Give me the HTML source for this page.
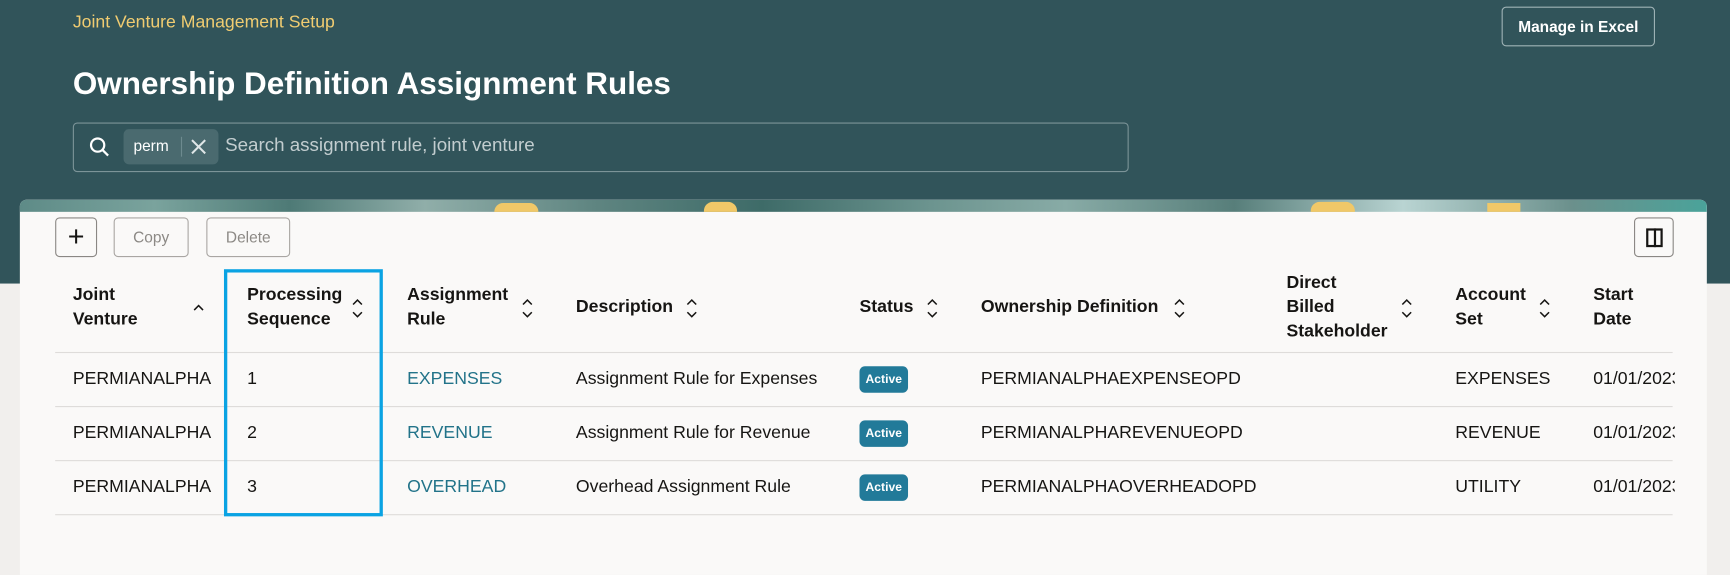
<!DOCTYPE html>
<html><head><meta charset="utf-8"><style>
*{box-sizing:border-box;margin:0;padding:0}
body{width:1730px;height:560px;overflow:hidden;background:#f1efed;font-family:"Liberation Sans",sans-serif}
#w{position:absolute;left:0;top:0;width:1568px;height:508px;transform:scale(1.10332);transform-origin:0 0}
.a{position:absolute}
.hdr{left:0;top:0;width:1568px;height:257px;background:#31545a}
.bc{left:66px;top:12px;font-size:16px;color:#f0cc71}
.xl{left:1361px;top:6px;width:139px;height:36px;border:1px solid #9fb3b6;border-radius:4px;color:#fff;font-size:14px;font-weight:bold;text-align:center;line-height:34px}
h1{position:absolute;left:66px;top:60px;font-size:28.5px;color:#fff;font-weight:bold}
.sb{left:66px;top:111px;width:957px;height:45px;border:1px solid #7c9498;border-radius:4px}
.chip{left:112px;top:117px;width:86px;height:32px;background:#4a6a6f;border-radius:5px;color:#fff;font-size:14px}
.ph{left:204px;top:122px;font-size:17px;color:#c2cdcf}
.card{left:18px;top:181px;width:1529px;height:340px;background:#faf9f8;border-radius:6px 6px 0 0;overflow:hidden}
.ban{left:0;top:0;width:1529px;height:11px;background:linear-gradient(90deg,#5e8b87 0,#7aa39d 8%,#4e7a76 16%,#90aea9 24%,#5f8581 34%,#3e6b68 44%,#6c948f 54%,#88aba6 62%,#577e7a 72%,#b9d4d2 82%,#6b908c 92%,#4aa39a 100%)}
.btn{border:1px solid #a9a6a3;border-radius:4px;font-size:14px;color:#8c8985;text-align:center;line-height:34px;height:36px;top:197px}
.th{font-size:16px;font-weight:bold;color:#161513;line-height:22px}
.td{font-size:16px;color:#161513;line-height:20px}
.ln{left:50px;width:1466px;height:1px;background:#dedcda}
.lk{color:#227389}
.bd{width:44px;height:24px;background:#227a99;border-radius:5px;color:#fff;font-size:11px;font-weight:bold;text-align:center;line-height:24px}
</style></head><body><div id="w">
<div class="a hdr"></div>
<div class="a bc">Joint Venture Management Setup</div>
<div class="a xl">Manage in Excel</div>
<h1>Ownership Definition Assignment Rules</h1>
<div class="a sb"></div>
<svg class="a" style="left:80px;top:123px" width="20" height="20" viewBox="0 0 20 20"><circle cx="8.5" cy="8.5" r="6" fill="none" stroke="#fff" stroke-width="2"/><path d="M13 13l5 5" stroke="#fff" stroke-width="2"/></svg>
<div class="a chip"><span style="position:absolute;left:9px;top:7px">perm</span><span style="position:absolute;left:52px;top:7px;width:1px;height:18px;background:#6d8a8f"></span><svg style="position:absolute;left:60px;top:8px" width="16" height="16"><path d="M2 2L14 14M14 2L2 14" stroke="#dfe6e7" stroke-width="1.8"/></svg></div>
<div class="a ph">Search assignment rule, joint venture</div>
<div class="a card">
<div class="a ban"></div>
<div class="a" style="left:430px;top:3px;width:40px;height:8px;background:#f0c868;border-radius:10px 10px 0 0"></div>
<div class="a" style="left:620px;top:2px;width:30px;height:9px;background:#f0c868;border-radius:8px 8px 0 0"></div>
<div class="a" style="left:1170px;top:2px;width:40px;height:9px;background:#f0c868;border-radius:8px 8px 0 0"></div>
<div class="a" style="left:1330px;top:3px;width:30px;height:8px;background:#f0c868"></div>
</div>
<div class="a btn" style="left:50px;width:38px;color:#161513;font-size:26px;line-height:32px;border-color:#8a8784">+</div>
<div class="a btn" style="left:103px;width:68px">Copy</div>
<div class="a btn" style="left:187px;width:76px">Delete</div>
<div class="a btn" style="left:1481px;width:36px;border-color:#8a8784"><span style="position:absolute;left:10px;top:9px;width:15px;height:17px;border:2px solid #161513"></span><span style="position:absolute;left:17px;top:9px;width:2px;height:17px;background:#161513"></span></div>

<div class="a th" style="left:66px;top:257px">Joint<br>Venture</div>
<div class="a th" style="left:224px;top:257px">Processing<br>Sequence</div>
<div class="a th" style="left:369px;top:257px">Assignment<br>Rule</div>
<div class="a th" style="left:522px;top:268px">Description</div>
<div class="a th" style="left:779px;top:268px">Status</div>
<div class="a th" style="left:889px;top:268px">Ownership Definition</div>
<div class="a th" style="left:1166px;top:246px">Direct<br>Billed<br>Stakeholder</div>
<div class="a th" style="left:1319px;top:257px">Account<br>Set</div>
<div class="a th" style="left:1444px;top:257px">Start<br>Date</div>
<svg class="a" style="left:0;top:0" width="1568" height="508">
<g fill="none" stroke="#161513" stroke-width="1.4">
<path d="M320 276l4-4 4 4M320 283l4 4 4-4"/>
<path d="M474 276l4-4 4 4M474 283l4 4 4-4"/>
<path d="M623 276l4-4 4 4M623 283l4 4 4-4"/>
<path d="M841 276l4-4 4 4M841 283l4 4 4-4"/>
<path d="M1065 276l4-4 4 4M1065 283l4 4 4-4"/>
<path d="M1271 276l4-4 4 4M1271 283l4 4 4-4"/>
<path d="M1396 276l4-4 4 4M1396 283l4 4 4-4"/>
<path d="M176 281l4-4 4 4"/>
</g></svg>
<div class="a ln" style="top:319px"></div>
<div class="a ln" style="top:368px"></div>
<div class="a ln" style="top:417px"></div>
<div class="a ln" style="top:466px"></div>

<div class="a td" style="left:66px;top:334px">PERMIANALPHA</div>
<div class="a td" style="left:224px;top:334px">1</div>
<div class="a td lk" style="left:369px;top:334px">EXPENSES</div>
<div class="a td" style="left:522px;top:334px">Assignment Rule for Expenses</div>
<div class="a bd" style="left:779px;top:332px">Active</div>
<div class="a td" style="left:889px;top:334px">PERMIANALPHAEXPENSEOPD</div>
<div class="a td" style="left:1319px;top:334px">EXPENSES</div>
<div class="a td" style="left:1444px;top:334px;width:74px;overflow:hidden;white-space:nowrap">01/01/2023</div>

<div class="a td" style="left:66px;top:383px">PERMIANALPHA</div>
<div class="a td" style="left:224px;top:383px">2</div>
<div class="a td lk" style="left:369px;top:383px">REVENUE</div>
<div class="a td" style="left:522px;top:383px">Assignment Rule for Revenue</div>
<div class="a bd" style="left:779px;top:381px">Active</div>
<div class="a td" style="left:889px;top:383px">PERMIANALPHAREVENUEOPD</div>
<div class="a td" style="left:1319px;top:383px">REVENUE</div>
<div class="a td" style="left:1444px;top:383px;width:74px;overflow:hidden;white-space:nowrap">01/01/2023</div>

<div class="a td" style="left:66px;top:432px">PERMIANALPHA</div>
<div class="a td" style="left:224px;top:432px">3</div>
<div class="a td lk" style="left:369px;top:432px">OVERHEAD</div>
<div class="a td" style="left:522px;top:432px">Overhead Assignment Rule</div>
<div class="a bd" style="left:779px;top:430px">Active</div>
<div class="a td" style="left:889px;top:432px">PERMIANALPHAOVERHEADOPD</div>
<div class="a td" style="left:1319px;top:432px">UTILITY</div>
<div class="a td" style="left:1444px;top:432px;width:74px;overflow:hidden;white-space:nowrap">01/01/2023</div>

<div class="a" style="left:203px;top:244px;width:144px;height:224px;border:3px solid #0aa3e3"></div>
</div></body></html>
